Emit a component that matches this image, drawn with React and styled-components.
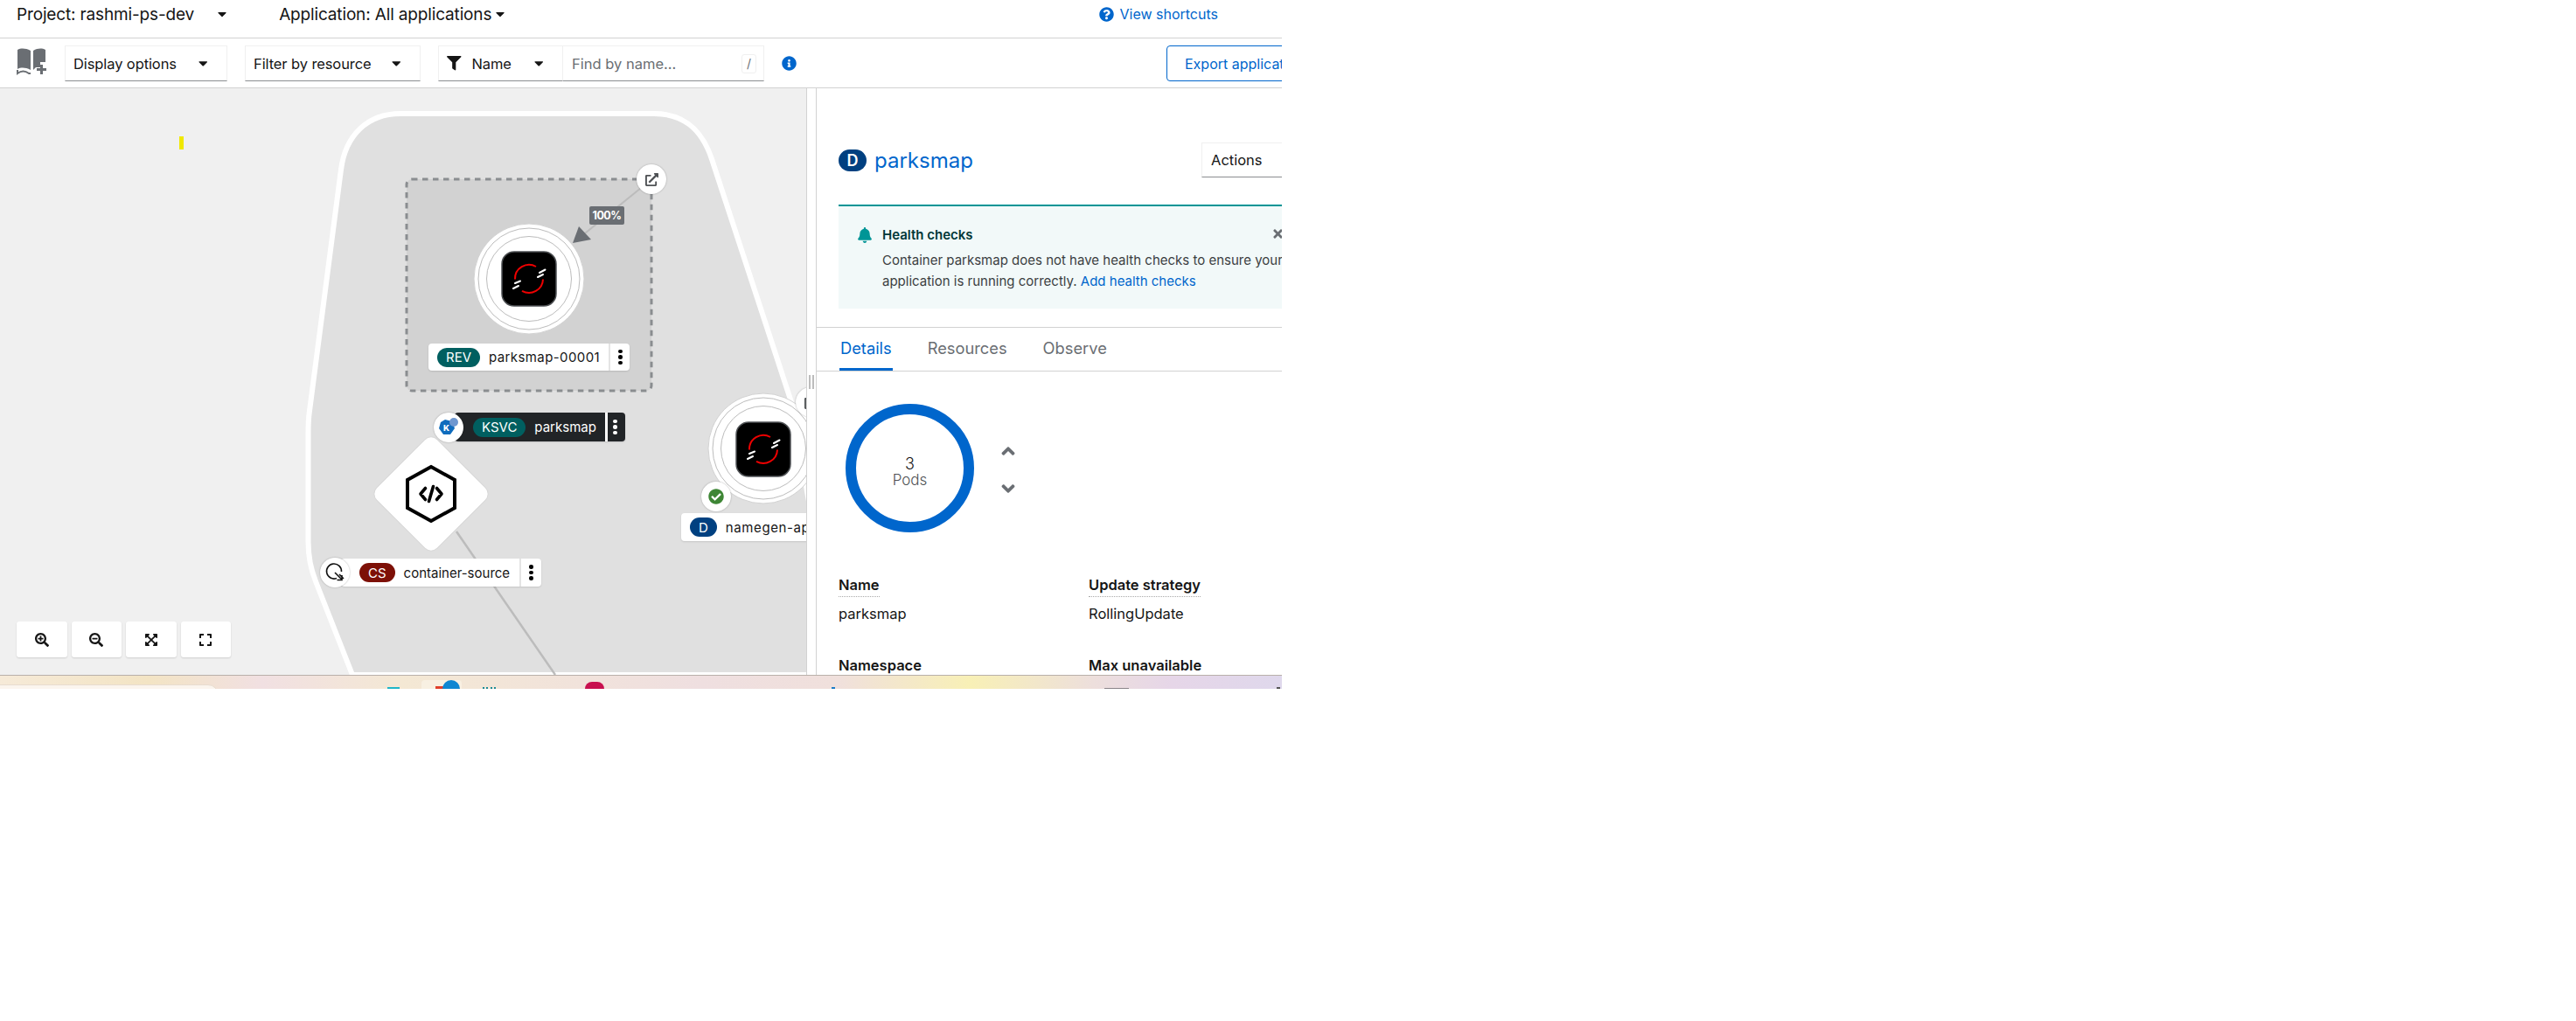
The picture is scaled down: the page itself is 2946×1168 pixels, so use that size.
import styled, { createGlobalStyle } from "styled-components";
import {
  FaAngleDown,
  FaAngleUp,
  FaBell,
  FaCaretDown,
  FaCheckCircle,
  FaExpand,
  FaExpandArrowsAlt,
  FaExternalLinkAlt,
  FaFilter,
  FaInfoCircle,
  FaQuestionCircle,
  FaSearchMinus,
  FaSearchPlus,
  FaTimes,
} from "react-icons/fa";

const FONT = `Inter, "Noto Sans", "Liberation Sans", sans-serif`;
const CANVAS_TOP = 101;

const Global = createGlobalStyle`
  html, body { margin: 0; padding: 0; background: #fff; }
  * { box-sizing: border-box; }
`;

function Kebab({ dark }) {
  return (
    <KebabBox $dark={dark}>
      <i />
      <i />
      <i />
    </KebabBox>
  );
}

function NodeLabel({ x, y, width, height, tag, tagColor, text, dark, noMenu, inset = 10, track = 0 }) {
  return (
    <Label $x={x} $y={y - CANVAS_TOP} $w={width} $h={height} $dark={dark} $inset={inset}>
      <Tag $bg={tagColor}>{tag}</Tag>
      <LabelText $track={track}>{text}</LabelText>
      {!noMenu && <Kebab dark={dark} />}
    </Label>
  );
}

function OpenshiftTile({ cx, cy }) {
  return (
    <g transform={`translate(${cx} ${cy})`}>
      <rect x="-31" y="-31" width="62" height="62" rx="14" fill="#000" stroke="#4f5255" strokeWidth="1.5" />
      <path d="M 8 -14 A 16 16 0 0 0 -16 0.5" fill="none" stroke="#e00" strokeWidth="2" />
      <path d="M -8 13.8 A 16 16 0 0 0 16 0.5" fill="none" stroke="#e00" strokeWidth="2" />
      <path d="M 12 -7 L 18.5 -10.5 M 10 -2 L 16 -5 M -16 5 L -10 2.5 M -18 11 L -12 8" stroke="#fff" strokeWidth="2" strokeLinecap="round" />
    </g>
  );
}

function Rings({ cx, cy }) {
  return (
    <g>
      <circle cx={cx} cy={cy} r="63" fill="#fff" stroke="#d2d2d2" strokeWidth="1" />
      <circle cx={cx} cy={cy} r="58" fill="none" stroke="#bcbcbc" strokeWidth="1" />
      <circle cx={cx} cy={cy} r="48.5" fill="none" stroke="#bcbcbc" strokeWidth="1" />
    </g>
  );
}

function Topology() {
  return (
    <TopologySvg viewBox={`0 ${CANVAS_TOP} 922 671`}>
      <defs>
        <clipPath id="view">
          <rect x="0" y={CANVAS_TOP} width="922" height="671" />
        </clipPath>
      </defs>
      <g clipPath="url(#view)">
        <path
          d="M 458 130 L 748 130 C 780 130 802 146 814 182 L 905 460 L 960 772 L 403 772 L 361 665 C 355 650 352.5 638 352.5 620 L 352.5 495 Q 352.5 480 354 470 L 390 194 C 395 155 420 130 458 130 Z"
          fill="#e0e0e0"
          stroke="#fff"
          strokeWidth="6"
        />
        <rect x="205" y="156" width="5" height="15" fill="#f0e800" />
        <rect
          x="465"
          y="205"
          width="280"
          height="242"
          rx="6"
          fill="#d2d2d2"
          stroke="#8a8d90"
          strokeWidth="3"
          strokeDasharray="6.5 5.5"
        />
        <line x1="733" y1="215" x2="664" y2="271" stroke="#bcbcbc" strokeWidth="2" />
        <polygon points="655,278 662,259 676,274" fill="#6a6e73" />
        <rect x="674" y="236" width="40" height="21" rx="2" fill="#6a6e73" />
        <text x="694" y="251" fontFamily={FONT} fontSize="12.5" fontWeight="700" fill="#fff" textAnchor="middle" letterSpacing="-0.5">
          100%
        </text>
        <Rings cx={605} cy={319} />
        <OpenshiftTile cx={605} cy={319} />
        <line x1="522" y1="608" x2="635" y2="772" stroke="#bcbcbc" strokeWidth="2.5" />
        <g transform="translate(493 565) rotate(45)">
          <rect x="-49" y="-49" width="98" height="98" rx="10" fill="#fff" stroke="#d8d8d8" strokeWidth="1" />
        </g>
        <g transform="translate(493 565)" fill="none" stroke="#000">
          <polygon points="0,-31 27,-16 27,16 0,31 -27,16 -27,-16" strokeWidth="4" />
          <path d="M -6.5 -6.5 L -12 0 L -6.5 6.5 M 6.5 -6.5 L 12 0 L 6.5 6.5 M 2.5 -8.5 L -2.5 8.5" strokeLinecap="round" strokeLinejoin="round" strokeWidth="3.6" />
        </g>
        <Rings cx={873} cy={513} />
        <OpenshiftTile cx={873} cy={514} />
      </g>
    </TopologySvg>
  );
}

function QuickSearchIcon() {
  return (
    <svg width="35" height="31" viewBox="0 0 35 31">
      <path d="M1 2 C5 0 10 0 16 3 V25 C10 22 5 22 1 24 Z M19 3 C24 0 29 0 33 2 V16 H27 V22 H22 L19 25 Z" fill="#6a6e73" />
      <path d="M1 25 V29 C5 26 10 26 14 29 H16" fill="none" stroke="#6a6e73" strokeWidth="2" />
      <path d="M28.5 19 V30 M23 24.5 H34" stroke="#6a6e73" strokeWidth="3" />
    </svg>
  );
}

export default function App() {
  return (
    <Screen>
      <Global />
      <TopBar>
        <Scope>Project: rashmi-ps-dev</Scope>
        <ScopeCaret $gap={24}>
          <FaCaretDown />
        </ScopeCaret>
        <Scope $offset={57}>Application: All applications</Scope>
        <ScopeCaret $gap={2}>
          <FaCaretDown />
        </ScopeCaret>
        <Shortcuts>
          <FaQuestionCircle />
          View shortcuts
        </Shortcuts>
      </TopBar>

      <Toolbar>
        <QuickSearch>
          <QuickSearchIcon />
        </QuickSearch>
        <Select $w={186}>
          Display options
          <FaCaretDown />
        </Select>
        <Select $w={201}>
          Filter by resource
          <FaCaretDown />
        </Select>
        <FilterGroup>
          <Select $w={143}>
            <FilterName>
              <FaFilter />
              Name
            </FilterName>
            <FaCaretDown />
          </Select>
          <SearchBox>
            Find by name...
            <SlashKey>/</SlashKey>
          </SearchBox>
        </FilterGroup>
        <InfoIcon>
          <FaInfoCircle />
        </InfoIcon>
        <ExportButton>Export application</ExportButton>
      </Toolbar>

      <Main>
        <Canvas>
          <Topology />

          <NodeLabel x={490} y={393} width={230} height={31} tag="REV" tagColor="#005f60" text="parksmap-00001" track={0.4} />
          <NodeLabel x={520} y={472} width={195} height={33} tag="KSVC" tagColor="#005f60" text="parksmap" dark inset={21} />
          <NodeLabel x={390} y={639} width={229} height={32} tag="CS" tagColor="#7d1007" text="container-source" inset={21} />
          <NodeLabel x={779} y={587} width={170} height={32} tag="D" tagColor="#004080" text="namegen-app" noMenu track={0.6} />

          <Decorator $x={745} $y={205 - CANVAS_TOP}>
            <FaExternalLinkAlt color="#4f5255" size={15} />
          </Decorator>
          <Decorator $x={513} $y={489 - CANVAS_TOP}>
            <svg width="26" height="24" viewBox="0 0 26 24">
              <polygon points="9,3 17,5 20,13 15,20 7,20 2,13 4,6" fill="#0f6cbd" />
              <text x="10.5" y="16" fontFamily={FONT} fontSize="9.5" fontWeight="800" fill="#fff" textAnchor="middle">
                K
              </text>
              <circle cx="19" cy="6" r="5" fill="#6e97d0" />
            </svg>
          </Decorator>
          <Decorator $x={383} $y={655 - CANVAS_TOP}>
            <svg width="22" height="24" viewBox="0 0 22 24" fill="none" stroke="#111" strokeWidth="1.6">
              <path d="M 13 18.5 A 8.5 8.5 0 1 1 18.5 11" />
              <path d="M 11 12 L 19 20 M 19 15 V 20.5 H 13.5 M 16 14 L 21 19" />
            </svg>
          </Decorator>
          <Decorator $x={819} $y={568 - CANVAS_TOP}>
            <FaCheckCircle color="#3e8635" size={18} />
          </Decorator>
          <Decorator $x={927} $y={460 - CANVAS_TOP}>
            <FaExternalLinkAlt color="#4f5255" size={15} />
          </Decorator>

          <ZoomControls>
            <ZoomButton>
              <FaSearchPlus />
            </ZoomButton>
            <ZoomButton>
              <FaSearchMinus />
            </ZoomButton>
            <ZoomButton>
              <FaExpandArrowsAlt />
            </ZoomButton>
            <ZoomButton>
              <FaExpand />
            </ZoomButton>
          </ZoomControls>
        </Canvas>

        <Splitter>
          <SplitHandle />
        </Splitter>

        <Panel>
          <PanelHeader>
            <HeaderTitle>
              <TitleBadge>D</TitleBadge>
              <TitleLink>parksmap</TitleLink>
            </HeaderTitle>
            <ActionsButton>Actions</ActionsButton>
          </PanelHeader>

          <Alert>
            <AlertTitle>
              <FaBell color="#009596" size={18} />
              Health checks
              <AlertClose>
                <FaTimes />
              </AlertClose>
            </AlertTitle>
            <AlertBody>
              Container parksmap does not have health checks to ensure your
              <br />
              application is running correctly. <a>Add health checks</a>
            </AlertBody>
          </Alert>

          <Tabs>
            <Tab $active>Details</Tab>
            <Tab>Resources</Tab>
            <Tab>Observe</Tab>
          </Tabs>

          <PodsRow>
            <PodRing>
              <PodCount>3</PodCount>
              <PodUnit>Pods</PodUnit>
            </PodRing>
            <Scaler>
              <FaAngleUp />
              <FaAngleDown />
            </Scaler>
          </PodsRow>

          <DetailGrid>
            <div>
              <Term>Name</Term>
              <Value>parksmap</Value>
            </div>
            <div>
              <Term>Update strategy</Term>
              <Value>RollingUpdate</Value>
            </div>
            <div>
              <Term>Namespace</Term>
            </div>
            <div>
              <Term>Max unavailable</Term>
            </div>
          </DetailGrid>
        </Panel>
      </Main>

      <Taskbar>
        <TaskSearch />
        <TaskMark $x={443} $w={14} $h={2} $bg="#1fb6c8" />
        <TaskTile />
        <TaskMark $x={498} $w={12} $h={3} $bg="#e0402c" />
        <TaskDot $x={506} $w={20} $h={10} $bg="#0f86d2" />
        <TaskDots />
        <TaskDot $x={669} $w={22} $h={8} $bg="#c8104f" />
        <TaskMark $x={951} $w={4} $h={2} $bg="#1c7cc8" />
        <TaskMark $x={1263} $w={28} $h={1} $bg="#8a8488" />
        <TaskMark $x={1460} $w={4} $h={2} $bg="#555" />
      </Taskbar>
    </Screen>
  );
}

const Screen = styled.div`
  width: 1466px;
  height: 788px;
  overflow: hidden;
  display: flex;
  flex-direction: column;
  font-family: ${FONT};
  color: #151515;
`;

const TopBar = styled.div`
  height: 44px;
  flex: none;
  display: flex;
  align-items: center;
  padding: 0 73px 11px 19px;
  border-bottom: 1px solid #d2d2d2;
`;
const Scope = styled.span`
  font-size: 19px;
  letter-spacing: -0.15px;
  margin-left: ${(p) => p.$offset || 0}px;
`;
const ScopeCaret = styled.span`
  display: flex;
  margin-left: ${(p) => p.$gap}px;
  font-size: 16px;
`;
const Shortcuts = styled.a`
  margin-left: auto;
  display: flex;
  align-items: center;
  gap: 6px;
  color: #06c;
  font-size: 16px;
  svg {
    font-size: 17px;
  }
`;

const Toolbar = styled.div`
  height: 57px;
  flex: none;
  display: flex;
  align-items: flex-start;
  gap: 20px;
  padding: 8px 0 0 19px;
  border-bottom: 1px solid #d2d2d2;
`;
const QuickSearch = styled.div`
  width: 35px;
  height: 41px;
  padding-top: 3px;
`;
const Select = styled.div`
  width: ${(p) => p.$w}px;
  height: 41px;
  flex: none;
  display: flex;
  align-items: center;
  justify-content: space-between;
  padding: 0 19px 0 9px;
  font-size: 16.5px;
  letter-spacing: -0.1px;
  border: 1px solid #f0f0f0;
  border-bottom-color: #8a8d90;
`;
const FilterGroup = styled.div`
  display: flex;
`;
const FilterName = styled.span`
  display: flex;
  align-items: center;
  gap: 12px;
`;
const SearchBox = styled.div`
  width: 230px;
  height: 41px;
  display: flex;
  align-items: center;
  justify-content: space-between;
  padding: 0 8px 0 10px;
  font-size: 16.5px;
  color: #6a6e73;
  border: 1px solid #f0f0f0;
  border-left: none;
  border-bottom-color: #8a8d90;
`;
const SlashKey = styled.span`
  width: 17px;
  height: 22px;
  display: flex;
  align-items: center;
  justify-content: center;
  font-size: 14px;
  border: 1px solid #f0f0f0;
  border-radius: 3px;
`;
const InfoIcon = styled.span`
  display: flex;
  height: 41px;
  align-items: center;
  font-size: 17px;
  color: #06c;
`;
const ExportButton = styled.button`
  margin-left: 403px;
  width: 190px;
  height: 41px;
  flex: none;
  padding: 0 20px;
  text-align: left;
  white-space: nowrap;
  font: 16px ${FONT};
  color: #06c;
  background: #fff;
  border: 1.5px solid #06c;
  border-radius: 4px;
`;

const Main = styled.div`
  flex: 1;
  min-height: 0;
  display: flex;
`;
const Canvas = styled.div`
  position: relative;
  width: 923px;
  flex: none;
  overflow: hidden;
  background: #f0f0f0;
  border-right: 1px solid #d2d2d2;
`;
const TopologySvg = styled.svg`
  display: block;
  width: 922px;
  height: 671px;
`;
const Label = styled.div`
  position: absolute;
  left: ${(p) => p.$x}px;
  top: ${(p) => p.$y}px;
  width: ${(p) => p.$w}px;
  height: ${(p) => p.$h}px;
  display: flex;
  align-items: center;
  gap: 10px;
  padding-left: ${(p) => p.$inset}px;
  border-radius: 4px;
  color: ${(p) => (p.$dark ? "#fff" : "#151515")};
  background: ${(p) => (p.$dark ? "#212427" : "#fff")};
  box-shadow: 0 1px 2px rgba(3, 3, 3, 0.12);
`;
const Tag = styled.span`
  height: 22px;
  padding: 0 10px;
  flex: none;
  display: flex;
  align-items: center;
  border-radius: 11px;
  font-size: 15px;
  color: #fff;
  background: ${(p) => p.$bg};
`;
const LabelText = styled.span`
  flex: 1;
  font-size: 15px;
  letter-spacing: ${(p) => p.$track}px;
  white-space: nowrap;
`;
const KebabBox = styled.span`
  width: 25px;
  align-self: stretch;
  flex: none;
  display: flex;
  flex-direction: column;
  align-items: center;
  justify-content: center;
  gap: 2px;
  padding-right: ${(p) => (p.$dark ? "5px" : "0")};
  border-left: ${(p) => (p.$dark ? "3px solid #fff" : "2px solid #e4e4e4")};
  i {
    width: 4.5px;
    height: 4.5px;
    border-radius: 50%;
    background: ${(p) => (p.$dark ? "#fff" : "#000")};
  }
`;
const Decorator = styled.span`
  position: absolute;
  left: ${(p) => p.$x - 17}px;
  top: ${(p) => p.$y - 17}px;
  width: 34px;
  height: 34px;
  display: flex;
  align-items: center;
  justify-content: center;
  border-radius: 50%;
  background: #fff;
  box-shadow: 0 0 2px rgba(3, 3, 3, 0.3);
`;
const ZoomControls = styled.div`
  position: absolute;
  left: 19px;
  bottom: 20px;
  display: flex;
  gap: 5px;
`;
const ZoomButton = styled.span`
  width: 57.5px;
  height: 41px;
  display: flex;
  align-items: center;
  justify-content: center;
  font-size: 16px;
  color: #151515;
  background: #fff;
  border-radius: 3px;
  box-shadow: 0 1px 2px rgba(3, 3, 3, 0.14);
`;

const Splitter = styled.div`
  width: 10px;
  flex: none;
  display: flex;
  align-items: flex-start;
  justify-content: center;
  padding-top: 328px;
`;
const SplitHandle = styled.span`
  width: 6px;
  height: 16px;
  border-left: 2px solid #bcbcbc;
  border-right: 2px solid #bcbcbc;
`;
const Panel = styled.div`
  flex: none;
  width: 533px;
  overflow: hidden;
  border-left: 1px solid #d2d2d2;
`;
const PanelHeader = styled.div`
  height: 133px;
  padding: 62px 0 0 25px;
  display: flex;
  align-items: flex-start;
`;
const HeaderTitle = styled.div`
  width: 415px;
  flex: none;
  margin-top: 6px;
  display: flex;
  align-items: center;
  gap: 9px;
`;
const TitleBadge = styled.span`
  width: 32px;
  height: 25px;
  display: flex;
  align-items: center;
  justify-content: center;
  border-radius: 13px;
  font-size: 18px;
  font-weight: 600;
  color: #fff;
  background: #004080;
`;
const TitleLink = styled.a`
  font-size: 24px;
  color: #06c;
`;
const ActionsButton = styled.div`
  width: 120px;
  height: 40px;
  flex: none;
  display: flex;
  align-items: center;
  padding-left: 10px;
  font-size: 16.5px;
  border: 1px solid #f0f0f0;
  border-bottom-color: #8a8d90;
`;
const Alert = styled.div`
  width: 600px;
  height: 119px;
  margin-left: 25px;
  padding: 23px 0 0 21px;
  border-top: 2px solid #009596;
  background: #f2f9f9;
`;
const AlertTitle = styled.div`
  position: relative;
  width: 489px;
  display: flex;
  align-items: center;
  gap: 11px;
  font-size: 15px;
  font-weight: 600;
  color: #003737;
`;
const AlertClose = styled.span`
  position: absolute;
  right: 0;
  top: 1px;
  display: flex;
  font-size: 15px;
  color: #6a6e73;
`;
const AlertBody = styled.div`
  margin: 8px 0 0 29px;
  font-size: 15px;
  line-height: 24px;
  white-space: nowrap;
  color: #3c3f42;
  a {
    color: #06c;
  }
`;
const Tabs = styled.div`
  margin-top: 21px;
  height: 51px;
  display: flex;
  gap: 39px;
  padding-left: 26px;
  border-top: 1px solid #d2d2d2;
  border-bottom: 1px solid #d2d2d2;
`;
const Tab = styled.span`
  height: 49px;
  padding: 0 1px;
  display: flex;
  align-items: center;
  font-size: 18.3px;
  color: ${(p) => (p.$active ? "#06c" : "#6a6e73")};
  border-bottom: 3px solid ${(p) => (p.$active ? "#06c" : "transparent")};
`;
const PodsRow = styled.div`
  margin-top: 37px;
  padding-left: 33px;
  display: flex;
  align-items: center;
  gap: 27px;
`;
const PodRing = styled.div`
  width: 147px;
  height: 147px;
  flex: none;
  display: flex;
  flex-direction: column;
  align-items: center;
  justify-content: center;
  padding-top: 8px;
  border: 12px solid #06c;
  border-radius: 50%;
`;
const PodCount = styled.span`
  font-size: 18px;
  font-weight: 300;
  line-height: 19px;
  color: #151515;
`;
const PodUnit = styled.span`
  font-size: 17px;
  font-weight: 300;
  line-height: 18px;
  color: #4f5255;
`;
const Scaler = styled.div`
  display: flex;
  flex-direction: column;
  gap: 19px;
  padding-top: 3px;
  font-size: 24px;
  color: #6a6e73;
`;
const DetailGrid = styled.div`
  margin-top: 50px;
  padding-left: 25px;
  display: grid;
  grid-template-columns: 286px 286px;
  row-gap: 39px;
`;
const Term = styled.div`
  width: fit-content;
  padding-bottom: 3px;
  font-size: 16.5px;
  font-weight: 600;
  border-bottom: 1px dotted #a8a8a8;
`;
const Value = styled.div`
  margin-top: 9px;
  font-size: 16.5px;
`;

const Taskbar = styled.div`
  position: relative;
  height: 16px;
  flex: none;
  overflow: hidden;
  border-top: 1px solid #b9b0aa;
  background: linear-gradient(
    90deg,
    #f6ead8 0,
    #f3e4c4 170px,
    #f1e0e2 300px,
    #f4e8d4 460px,
    #efdfe0 800px,
    #f0e0dc 960px,
    #f8f0b6 1110px,
    #eddfdc 1250px,
    #e6d6e8 1340px,
    #dfd8ec 1466px
  );
`;
const TaskSearch = styled.span`
  position: absolute;
  left: -20px;
  top: 10px;
  width: 270px;
  height: 30px;
  border-radius: 12px;
  border: 1px solid #e8dcd0;
  background: #fbf5ee;
`;
const TaskTile = styled.span`
  position: absolute;
  left: 482px;
  top: 5px;
  width: 46px;
  height: 30px;
  border-radius: 4px;
  background: #f8f0e2;
`;
const TaskMark = styled.span`
  position: absolute;
  left: ${(p) => p.$x}px;
  bottom: 0;
  width: ${(p) => p.$w}px;
  height: ${(p) => p.$h}px;
  background: ${(p) => p.$bg};
`;
const TaskDots = styled.span`
  position: absolute;
  left: 552px;
  bottom: 0;
  width: 16px;
  height: 2px;
  background: repeating-linear-gradient(90deg, #1c8c96 0 2px, transparent 2px 4.5px);
`;
const TaskDot = styled.span`
  position: absolute;
  left: ${(p) => p.$x}px;
  bottom: 0;
  width: ${(p) => p.$w}px;
  height: ${(p) => p.$h}px;
  border-radius: ${(p) => p.$w / 2}px ${(p) => p.$w / 2}px 0 0;
  background: ${(p) => p.$bg};
`;
